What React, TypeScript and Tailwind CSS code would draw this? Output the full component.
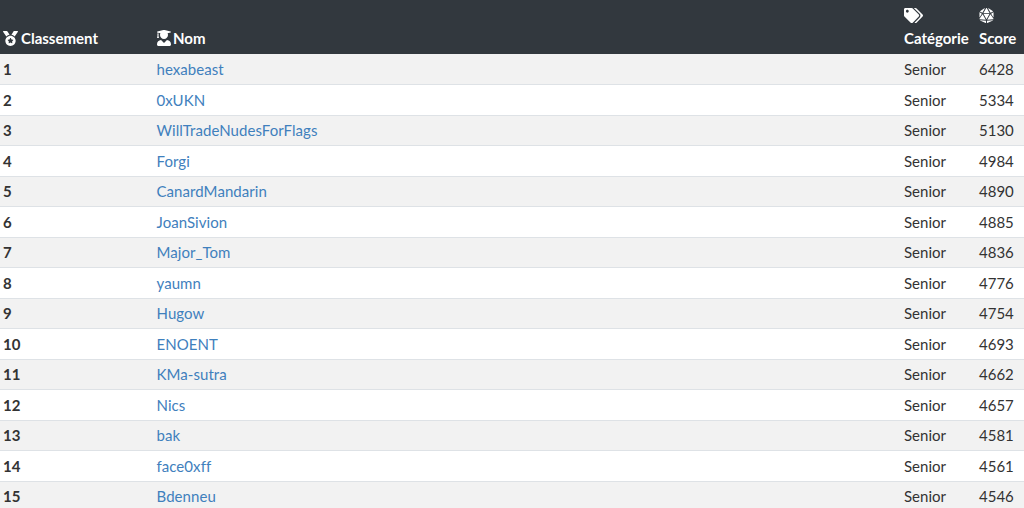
import { FaDiceD20, FaMedal, FaTags, FaUserGraduate } from 'react-icons/fa';

const players = [
  ['hexabeast', 6428],
  ['0xUKN', 5334],
  ['WillTradeNudesForFlags', 5130],
  ['Forgi', 4984],
  ['CanardMandarin', 4890],
  ['JoanSivion', 4885],
  ['Major_Tom', 4836],
  ['yaumn', 4776],
  ['Hugow', 4754],
  ['ENOENT', 4693],
  ['KMa-sutra', 4662],
  ['Nics', 4657],
  ['bak', 4581],
  ['face0xff', 4561],
  ['Bdenneu', 4546],
] as const;

export default function App() {
  return (
    <div className="h-[508px] overflow-hidden bg-white font-['Lato',sans-serif] text-[15px] leading-[20.5px] text-[#333]">
      <table className="w-[1024px] table-fixed border-collapse">
        <colgroup>
          <col className="w-[153px]" />
          <col className="w-[748px]" />
          <col className="w-[75px]" />
          <col className="w-[48px]" />
        </colgroup>
        <thead>
          <tr className="bg-[#32383e] text-left align-bottom font-bold text-white">
            <th className="h-[54px] px-[3px] pb-[6px]">
              <FaMedal className="mr-[3px] inline-block size-[15px] align-[-2px]" />
              Classement
            </th>
            <th className="px-[3px] pb-[6px]">
              <FaUserGraduate className="mr-[1px] inline-block size-[16px] align-[-2px]" />
              Nom
            </th>
            <th className="px-[3px] pb-[6px]">
              <FaTags className="block size-[19px]" />
              <span className="mt-[3px] block whitespace-nowrap">Catégorie</span>
            </th>
            <th className="px-[3px] pb-[6px]">
              <FaDiceD20 className="block size-[15px]" />
              <span className="mt-[5px] block">Score</span>
            </th>
          </tr>
        </thead>
        <tbody>
          {players.map(([name, score], i) => (
            <tr key={name} className="border-b border-[#dee2e6] odd:bg-[#f2f2f2]">
              <td className="h-[30.5px] px-[3px] pt-[0.5px] font-bold">{i + 1}</td>
              <td className="pr-[3px] pl-[3.5px] pt-[0.5px] tracking-[0.06px] text-[#3f80bd]">{name}</td>
              <td className="px-[3px] pt-[0.5px]">Senior</td>
              <td className="px-[3px] pt-[0.5px]">{score}</td>
            </tr>
          ))}
        </tbody>
      </table>
    </div>
  );
}
